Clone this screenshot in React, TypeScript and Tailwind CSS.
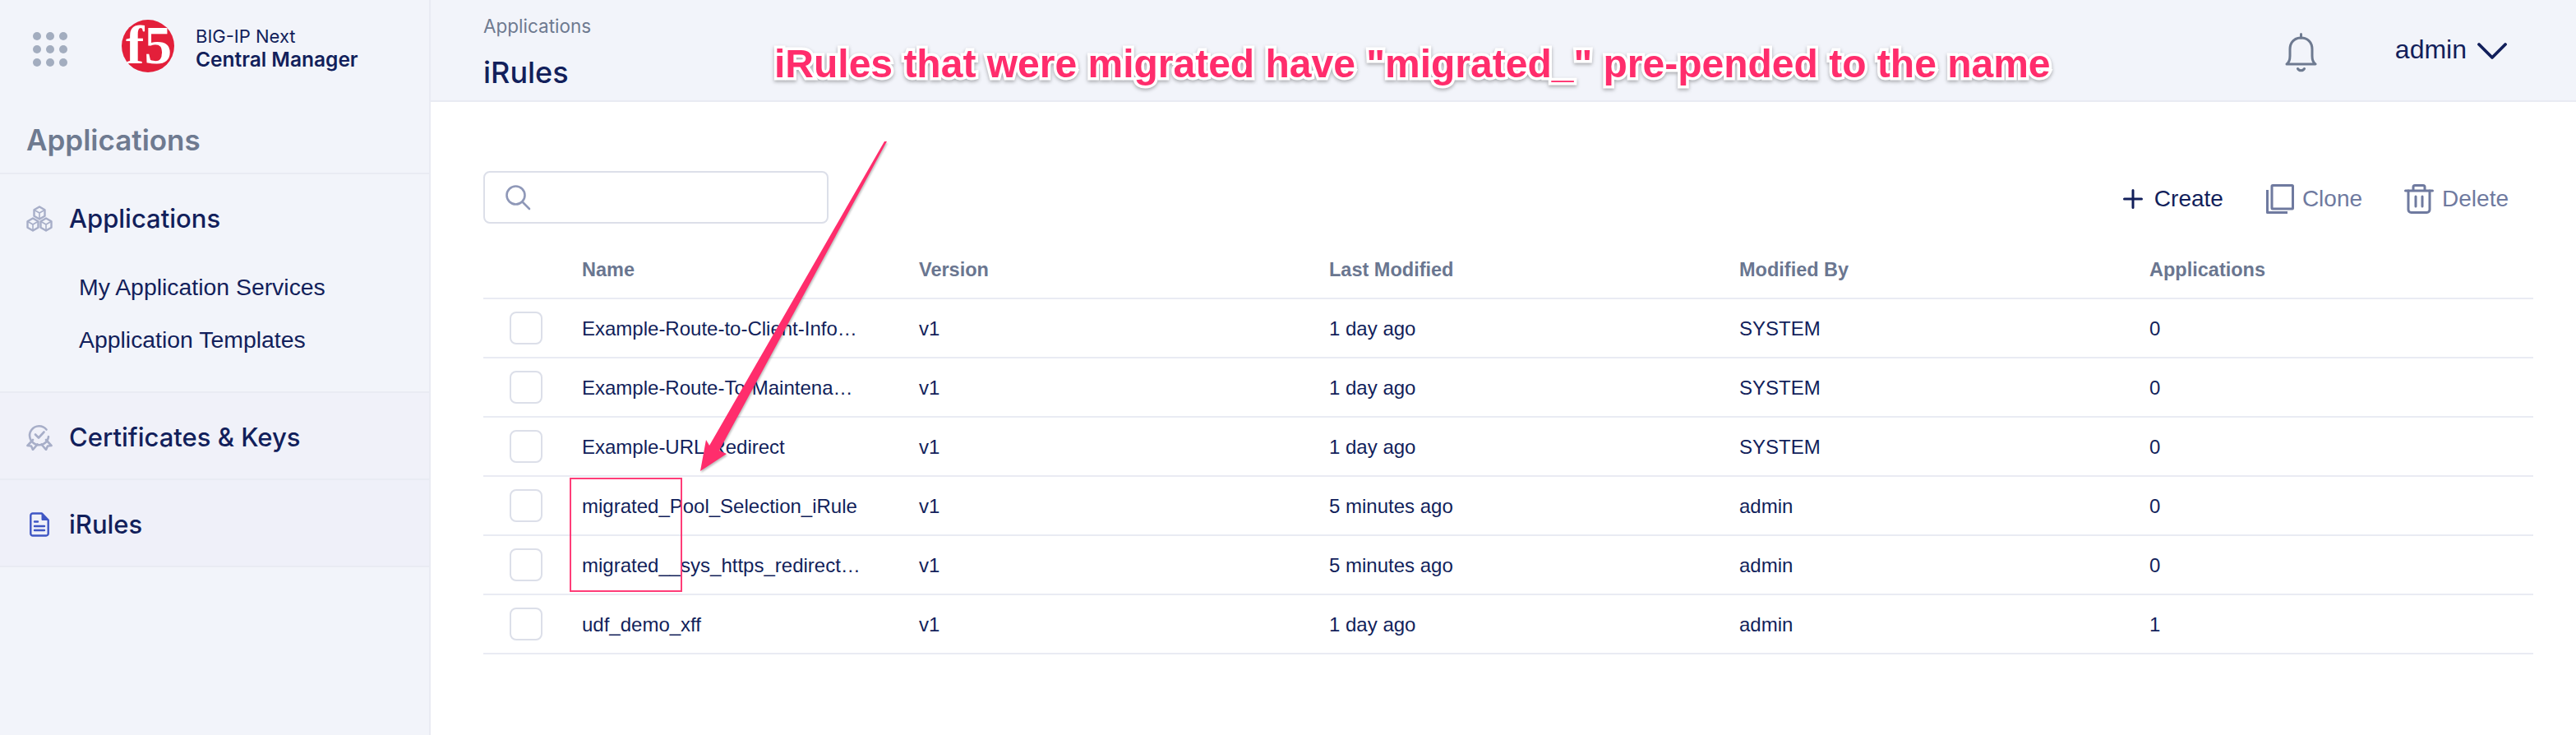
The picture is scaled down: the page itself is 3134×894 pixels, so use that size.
const ui = "font-['Inter','Liberation_Sans',sans-serif]";
const helv = "font-['Liberation_Sans','Inter',sans-serif]";

const rows = [
  { name: "Example-Route-to-Client-Info…", modified: "1 day ago", by: "SYSTEM", apps: 0 },
  { name: "Example-Route-To-Maintena…", modified: "1 day ago", by: "SYSTEM", apps: 0 },
  { name: "Example-URL-Redirect", modified: "1 day ago", by: "SYSTEM", apps: 0 },
  { name: "migrated_Pool_Selection_iRule", modified: "5 minutes ago", by: "admin", apps: 0 },
  { name: "migrated__sys_https_redirect…", modified: "5 minutes ago", by: "admin", apps: 0 },
  { name: "udf_demo_xff", modified: "1 day ago", by: "admin", apps: 1 },
];

const gridCols = "grid grid-cols-[120px_410px_499px_499px_499px_1fr] items-center";

const Cube = ({ x, y }: { x: number; y: number }) => (
  <g transform={`translate(${x} ${y})`}>
    <path d="M0 -7.5 L6.5 -3.75 V3.75 L0 7.5 L-6.5 3.75 V-3.75 Z" />
    <path d="M-6.5 -3.75 L0 0 L6.5 -3.75 M0 0 V7.5" strokeWidth="1.6" />
  </g>
);

const CubesIcon = () => (
  <svg viewBox="0 0 32 32" className="w-8 h-8 shrink-0" fill="none" stroke="#a7aec8" strokeWidth="2.4" strokeLinejoin="round">
    <Cube x={16} y={9} />
    <Cube x={8} y={23} />
    <Cube x={24} y={23} />
  </svg>
);

const AwardIcon = () => (
  <svg viewBox="0 0 32 32" className="w-8 h-8 shrink-0" fill="none" stroke="#a7aec8" strokeWidth="2.6" strokeLinecap="round" strokeLinejoin="round">
    <path d="M24.5 6.5 A11.5 11.5 0 1 0 27 15" />
    <path d="M11 12.5 L15 16.5 L21.5 9.5" />
    <path d="M8 19 L1.5 26 L6 26.5 L8 31 L13.5 24.5" />
    <path d="M24 19 L30.5 26 L26 26.5 L24 31 L18.5 24.5" />
  </svg>
);

const FileIcon = () => (
  <svg viewBox="0 0 24 30" className="w-6 h-[30px] shrink-0 mx-1" fill="none" stroke="#3f56c4" strokeWidth="2.4" strokeLinejoin="round" strokeLinecap="round">
    <path d="M4 1.5 H15 L22.7 9.5 V26 A2.5 2.5 0 0 1 20.2 28.5 H4 A2.5 2.5 0 0 1 1.3 26 V4 A2.5 2.5 0 0 1 4 1.5 Z" />
    <path d="M15 1.5 V9.5 H22.7" fill="#3f56c4" strokeWidth="1" />
    <path d="M6 11.5 H10 M6 17 H18 M6 22 H18" />
  </svg>
);

const F5Logo = () => (
  <svg viewBox="0 0 64 64" className="w-16 h-16 shrink-0 overflow-visible">
    <circle cx="32" cy="32" r="32" fill="#e31f3a" />
    <text x="5" y="53" fontFamily="'Liberation Serif', serif" fontWeight="700" fontSize="66" fill="#fff" textLength="56" lengthAdjust="spacingAndGlyphs">f5</text>
  </svg>
);

const SideItem = ({ icon, label, className = "" }: { icon: React.ReactNode; label: string; className?: string }) => (
  <div className={`flex items-center gap-[20px] pl-8 ${className}`}>
    {icon}
    <span className="text-[31px] leading-10 font-medium text-[#121f5b]">{label}</span>
  </div>
);

const Sidebar = () => (
  <aside className={`w-[524px] shrink-0 bg-[#f2f4fa] border-r-2 border-[#e9ebf3] ${ui}`}>
    <div className="h-[120px] flex items-center pl-10">
      <div className="grid grid-cols-3 gap-x-[6px] gap-y-[6px]">
        {Array.from({ length: 9 }).map((_, i) => (
          <span key={i} className="w-[10px] h-[10px] rounded-full bg-[#a3adbf]" />
        ))}
      </div>
      <div className="ml-[66px] mb-2">
        <F5Logo />
      </div>
      <div className="ml-[26px] mb-1 text-[#121f5b]">
        <div className="text-[22px] leading-7">BIG-IP Next</div>
        <div className="text-[24.5px] leading-7 font-semibold">Central Manager</div>
      </div>
    </div>
    <div className="h-[92px] pt-[28px] pl-8 border-b-2 border-[#e9ebf3]">
      <h2 className="text-[35px] leading-[44px] font-semibold text-[#6e7a90]">Applications</h2>
    </div>
    <div className="h-[266px] pt-[34px] border-b-2 border-[#e9ebf3]">
      <SideItem icon={<CubesIcon />} label="Applications" />
      <ul className={`mt-[31px] pl-24 text-[#121f5b] text-[28.4px] ${helv}`}>
        <li className="h-16 leading-[64px]">My Application Services</li>
        <li className="h-16 leading-[64px]">Application Templates</li>
      </ul>
    </div>
    <SideItem icon={<AwardIcon />} label="Certificates & Keys" className="h-[106px] pt-1 bg-[#f0f1f9] border-b-2 border-[#e9ebf3]" />
    <SideItem icon={<FileIcon />} label="iRules" className="h-[106px] pt-1 bg-[#eff0f9] border-b-2 border-[#e9ebf3]" />
  </aside>
);

const Topbar = () => (
  <header className="h-[124px] bg-[#f2f4fa] border-b-2 border-[#e9ebf3] flex items-start justify-between pl-16 pr-[82px]">
    <div className={ui}>
      <div className="mt-[18px] text-[22.5px] leading-7 text-[#6e7a90]">Applications</div>
      <div className="mt-[22px] text-[36px] leading-10 font-medium text-[#121f5b]">iRules</div>
    </div>
    <div className="flex items-center mt-10 h-12">
      <svg viewBox="0 0 39 48" className="w-[39px] h-12" fill="none" stroke="#6e7a90" strokeWidth="3" strokeLinecap="round" strokeLinejoin="round">
        <path d="M19.5 1.5 V6" />
        <path d="M2 38 C5 36 6 33 6 28 V20 C6 11 12 6 19.5 6 C27 6 33 11 33 20 V28 C33 33 34 36 37 38 Z" />
        <path d="M15.5 43.5 C17 46.5 22 46.5 23.5 43.5" />
      </svg>
      <span className={`ml-[95px] mb-2 text-[32px] leading-10 text-[#121f5b] ${helv}`}>admin</span>
      <svg viewBox="0 0 36 22" className="ml-[13px] mr-[2px] w-9 h-[22px] mb-1" fill="none" stroke="#121f5b" strokeWidth="3.8" strokeLinecap="round" strokeLinejoin="round">
        <path d="M2 3 L18 19 L34 3" />
      </svg>
    </div>
  </header>
);

const Toolbar = () => (
  <div className={`h-[170px] -mb-[2px] flex items-start justify-between ${helv}`}>
    <div className="mt-[84px] w-[420px] h-16 rounded-lg border-2 border-[#dcdfe9] flex items-center pl-6">
      <svg viewBox="0 0 32 32" className="w-8 h-8" fill="none" stroke="#8f98b8" strokeWidth="2.6" strokeLinecap="round">
        <circle cx="13.5" cy="13.5" r="11" />
        <path d="M21.5 21.5 L30 30" />
      </svg>
    </div>
    <div className="mt-[100px] flex items-center text-[28px] leading-9 mr-[30px]">
      <svg viewBox="0 0 24 24" className="w-6 h-6" fill="none" stroke="#121f5b" strokeWidth="3" strokeLinecap="round">
        <path d="M12 1.5 V22.5 M1.5 12 H22.5" />
      </svg>
      <span className="ml-[14px] text-[#121f5b]">Create</span>
      <svg viewBox="0 0 34 36" className="ml-[52px] w-[34px] h-9" fill="none" stroke="#6f7a9f" strokeWidth="3" strokeLinejoin="round">
        <rect x="7" y="1.5" width="25.5" height="28.5" rx="1" />
        <path d="M1.5 7 V34.5 H26" />
      </svg>
      <span className="ml-[10px] text-[#6f7a9f]">Clone</span>
      <svg viewBox="0 0 36 36" className="ml-[51px] w-9 h-9" fill="none" stroke="#6f7a9f" strokeWidth="3" strokeLinecap="round" strokeLinejoin="round">
        <path d="M1.5 8 H34.5" />
        <path d="M11 7 V3.5 C11 2 12 1.5 13 1.5 H23 C24 1.5 25 2 25 3.5 V7" />
        <path d="M5 8 V31 C5 33 6.5 34.5 8.5 34.5 H27.5 C29.5 34.5 31 33 31 31 V8" />
        <path d="M14 15 V27 M22 15 V27" />
      </svg>
      <span className="ml-[10px] text-[#6f7a9f]">Delete</span>
    </div>
  </div>
);

const IRulesTable = () => (
  <div className={`text-[24px] text-[#121f5b] ${helv}`}>
    <div className={`${gridCols} h-[72px] pt-1 border-b-2 border-[#e9ebf3] text-[23.5px] font-semibold text-[#6a7690]`}>
      <span />
      <span>Name</span>
      <span>Version</span>
      <span>Last Modified</span>
      <span>Modified By</span>
      <span>Applications</span>
    </div>
    {rows.map((row) => (
      <div key={row.name} className={`${gridCols} h-[72px] border-b-2 border-[#e9ebf3]`}>
        <span className="ml-8 w-10 h-10 rounded-lg border-2 border-[#dcdfe9]" />
        <span className="truncate pt-[2px]">{row.name}</span>
        <span className="pt-[2px]">v1</span>
        <span className="pt-[2px]">{row.modified}</span>
        <span className="pt-[2px]">{row.by}</span>
        <span className="pt-[2px]">{row.apps}</span>
      </div>
    ))}
  </div>
);

const Annotations = () => (
  <>
    <div className="absolute left-[942px] top-[50px] text-[48px] leading-[56px] font-bold whitespace-nowrap text-[#ff2d6c] font-['Liberation_Sans',sans-serif] [-webkit-text-stroke:7px_white] [paint-order:stroke_fill] drop-shadow-[0_2px_2px_rgba(0,0,0,0.3)]">
      iRules that were migrated have "migrated_" pre-pended to the name
    </div>
    <svg className="absolute left-0 top-0 pointer-events-none" width="3134" height="894">
      <polygon
        points="1079,172 875,548 884,552 852,573 859,535 863,542 1076,172"
        fill="#ff2d6c"
        style={{ filter: "drop-shadow(1px 2px 1px rgba(0,0,0,0.25))" }}
      />
    </svg>
    <div className="absolute left-[693px] top-[581px] w-[137px] h-[139px] border-2 border-[#ff3d78]" />
  </>
);

export default function App() {
  return (
    <div className="relative w-[3134px] h-[894px] flex bg-white overflow-hidden">
      <Sidebar />
      <main className="flex-1 flex flex-col">
        <Topbar />
        <div className="pl-16 pr-[52px]">
          <Toolbar />
          <IRulesTable />
        </div>
      </main>
      <Annotations />
    </div>
  );
}
